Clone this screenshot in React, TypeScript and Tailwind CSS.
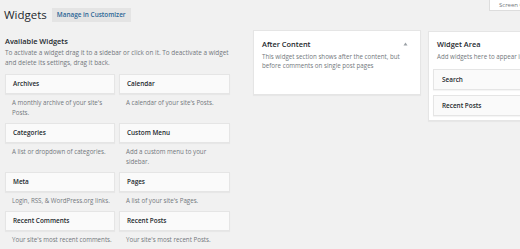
import React from 'react';

const availableWidgets = [
  { title: 'Archives', desc: ["A monthly archive of your site's", 'Posts.'] },
  { title: 'Calendar', desc: ["A calendar of your site's Posts."] },
  { title: 'Categories', desc: ['A list or dropdown of categories.'] },
  { title: 'Custom Menu', desc: ['Add a custom menu to your', 'sidebar.'] },
  { title: 'Meta', desc: ['Login, RSS, & WordPress.org links.'] },
  { title: 'Pages', desc: ["A list of your site's Pages."] },
  { title: 'Recent Comments', desc: ["Your site's most recent comments."] },
  { title: 'Recent Posts', desc: ["Your site's most recent Posts."] },
];

const sidebarWidgets = ['Search', 'Recent Posts'];

const App: React.FC = () => {
  return (
    <div className="w-[520px] h-[249px] overflow-hidden bg-[#f1f1f1] text-[#23282d] font-['Open_Sans',sans-serif]">
      {/* header */}
      <div className="flex items-start justify-between">
        <div className="flex items-center gap-[5px] pl-[4px] pt-[7px]">
          <h1 className="text-[11.5px] leading-[16px] font-normal">Widgets</h1>
          <button className="h-[14px] px-[5px] bg-[#e4e4e4] text-[6.4px] font-semibold text-[#2a6496] leading-[14px]">
            Manage in Customizer
          </button>
        </div>
        <div className="mr-[-40px] h-[11px] w-[71px] bg-white border border-t-0 border-[#ddd] pl-[9px] text-[6px] leading-[10px] text-[#72777c]">
          Screen Options
        </div>
      </div>

      {/* main */}
      <div className="flex items-start mt-[7px]">
        <div className="ml-[5px] w-[226px]">
          <h2 className="text-[7.4px] font-semibold leading-[12px] mt-[5px]">Available Widgets</h2>
          <p className="text-[6.4px] leading-[10px] text-[#72777c] mt-[1px]">
            To activate a widget drag it to a sidebar or click on it. To deactivate a widget
            <br />
            and delete its settings, drag it back.
          </p>
          <div className="grid grid-cols-[110px_111px] gap-x-[4px] mt-[6px]">
            {availableWidgets.map((w) => (
              <div key={w.title} className="mb-[5px]">
                <div className="h-[20px] bg-[#fafafa] border border-[#e5e5e5] shadow-[0_1px_1px_rgba(0,0,0,0.04)] px-[7px] flex items-center text-[6.4px] font-semibold">
                  {w.title}
                </div>
                <p className="mt-[4px] pl-[7px] text-[6.2px] leading-[10px] text-[#72777c] whitespace-nowrap">
                  {w.desc.map((line, i) => (
                    <React.Fragment key={i}>
                      {i > 0 && <br />}
                      {line}
                    </React.Fragment>
                  ))}
                </p>
              </div>
            ))}
          </div>
        </div>

        <div className="ml-[23px] flex items-start gap-[7px]">
          <div className="w-[168px] h-[65px] bg-white border border-[#e5e5e5] shadow-[0_1px_1px_rgba(0,0,0,0.04)] px-[8px] pt-[7px]">
            <div className="flex items-center justify-between">
              <h3 className="text-[7.4px] font-semibold leading-[12px]">After Content</h3>
              <svg width="5" height="4" viewBox="0 0 5 4" className="mr-[4px] text-[#9aa0a5]">
                <path d="M2.5 0.5 L4.5 3.5 L0.5 3.5 Z" fill="currentColor" />
              </svg>
            </div>
            <p className="mt-[2px] text-[6.2px] leading-[9px] text-[#72777c] whitespace-nowrap">
              This widget section shows after the content, but
              <br />
              before comments on single post pages
            </p>
          </div>

          <div className="mt-[1px] w-[170px] h-[90px] bg-white border border-[#e5e5e5] shadow-[0_1px_1px_rgba(0,0,0,0.04)] px-[4px] pt-[6px]">
            <h3 className="pl-[4px] text-[7.4px] font-semibold leading-[12px]">Widget Area</h3>
            <p className="pl-[4px] mt-[2px] text-[6.2px] leading-[9px] text-[#72777c] whitespace-nowrap">
              Add widgets here to appear in your sidebar.
            </p>
            <div className="mt-[8px] flex flex-col gap-[5px]">
              {sidebarWidgets.map((s) => (
                <div
                  key={s}
                  className="h-[21px] bg-[#fafafa] border border-[#e5e5e5] shadow-[0_1px_1px_rgba(0,0,0,0.04)] pl-[8px] flex items-center text-[6.4px] font-semibold"
                >
                  {s}
                </div>
              ))}
            </div>
          </div>
        </div>
      </div>
    </div>
  );
};

export default App;
